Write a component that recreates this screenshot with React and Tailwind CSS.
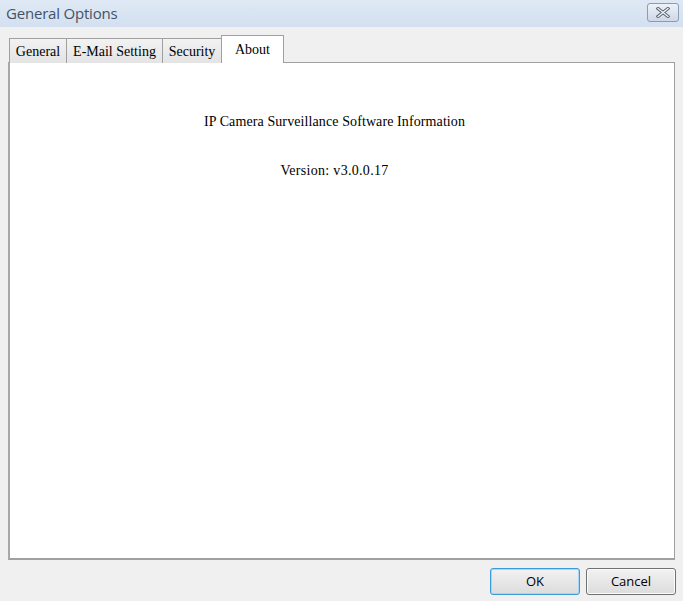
export default function App() {
  const serif = { fontFamily: '"Liberation Serif", "Times New Roman", serif' };
  return (
    <div className="w-[683px] h-[601px] bg-[#f0f0f0] flex flex-col overflow-hidden select-none">
      {/* Title bar */}
      <div className="h-[27px] shrink-0 bg-gradient-to-b from-[#dfe9f5] to-[#d3e0f0] flex items-center justify-between pl-[6px] pr-[4px]">
        <span className="text-[15px] text-[#435366] leading-none tracking-[-0.2px]" style={{ fontFamily: '"Open Sans", "Noto Sans", sans-serif' }}>
          General Options
        </span>
        <div className="w-[32px] h-[19px] mt-[-2px] rounded-[3px] border border-[#8a9bb2] bg-gradient-to-b from-[#eef2f8] to-[#cfd8e6] flex items-center justify-center">
          <svg width="14" height="11" viewBox="0 0 14 11">
            <path d="M2 1.5 L12 9.5 M12 1.5 L2 9.5" stroke="#56606e" strokeWidth="3.2" strokeLinecap="square" />
            <path d="M2 1.5 L12 9.5 M12 1.5 L2 9.5" stroke="#f4f6f9" strokeWidth="1.3" strokeLinecap="square" />
          </svg>
        </div>
      </div>

      {/* Body */}
      <div className="flex-1 flex flex-col px-[8px] pt-[8px]">
        {/* Tabs */}
        <div className="flex items-end pl-[1px] relative z-10 -mb-[1px] h-[28px]" style={serif}>
          <div className="h-[25px] w-[58px] border border-[#a0a0a0] border-b-0 bg-gradient-to-b from-[#f2f2f2] to-[#e4e4e4] flex items-center justify-center text-[14px] text-black">
            General
          </div>
          <div className="h-[25px] w-[96px] border border-l-0 border-[#a0a0a0] border-b-0 bg-gradient-to-b from-[#f2f2f2] to-[#e4e4e4] flex items-center justify-center text-[14px] text-black">
            E-Mail Setting
          </div>
          <div className="h-[25px] w-[59px] border border-l-0 border-[#a0a0a0] border-b-0 bg-gradient-to-b from-[#f2f2f2] to-[#e4e4e4] flex items-center justify-center text-[14px] text-black">
            Security
          </div>
          <div className="h-[28px] w-[63px] border border-[#a0a0a0] border-b-0 bg-white flex items-start justify-center pt-[3px] text-[14px] text-black -ml-[1px]">
            About
          </div>
        </div>

        {/* Panel */}
        <div className="w-[667px] h-[498px] border border-[#a0a0a0] border-l-2 border-b-2 border-l-[#a8a8a8] bg-white flex flex-col items-center pt-[50px] pr-[15px] text-black" style={serif}>
          <div className="text-[14px] leading-[18px] tracking-[0.1px]">IP Camera Surveillance Software Information</div>
          <div className="text-[14px] leading-[18px] mt-[31px] tracking-[0.3px]">Version: v3.0.0.17</div>
        </div>

        {/* Buttons */}
        <div className="flex justify-end gap-[6px] mt-[8px] -mr-[1px]" style={{ fontFamily: '"Open Sans", "Noto Sans", sans-serif' }}>
          <button className="w-[90px] h-[27px] rounded-[3px] border border-[#3c9ad8] bg-gradient-to-b from-[#f2f2f2] to-[#dcdcdc] text-[13px] text-black shadow-[inset_0_0_0_1px_#a6d8f5]">
            OK
          </button>
          <button className="w-[90px] h-[27px] rounded-[3px] border border-[#707070] bg-gradient-to-b from-[#f2f2f2] to-[#dcdcdc] text-[13px] text-black shadow-[inset_0_0_0_1px_#fcfcfc]">
            Cancel
          </button>
        </div>
      </div>
    </div>
  );
}
